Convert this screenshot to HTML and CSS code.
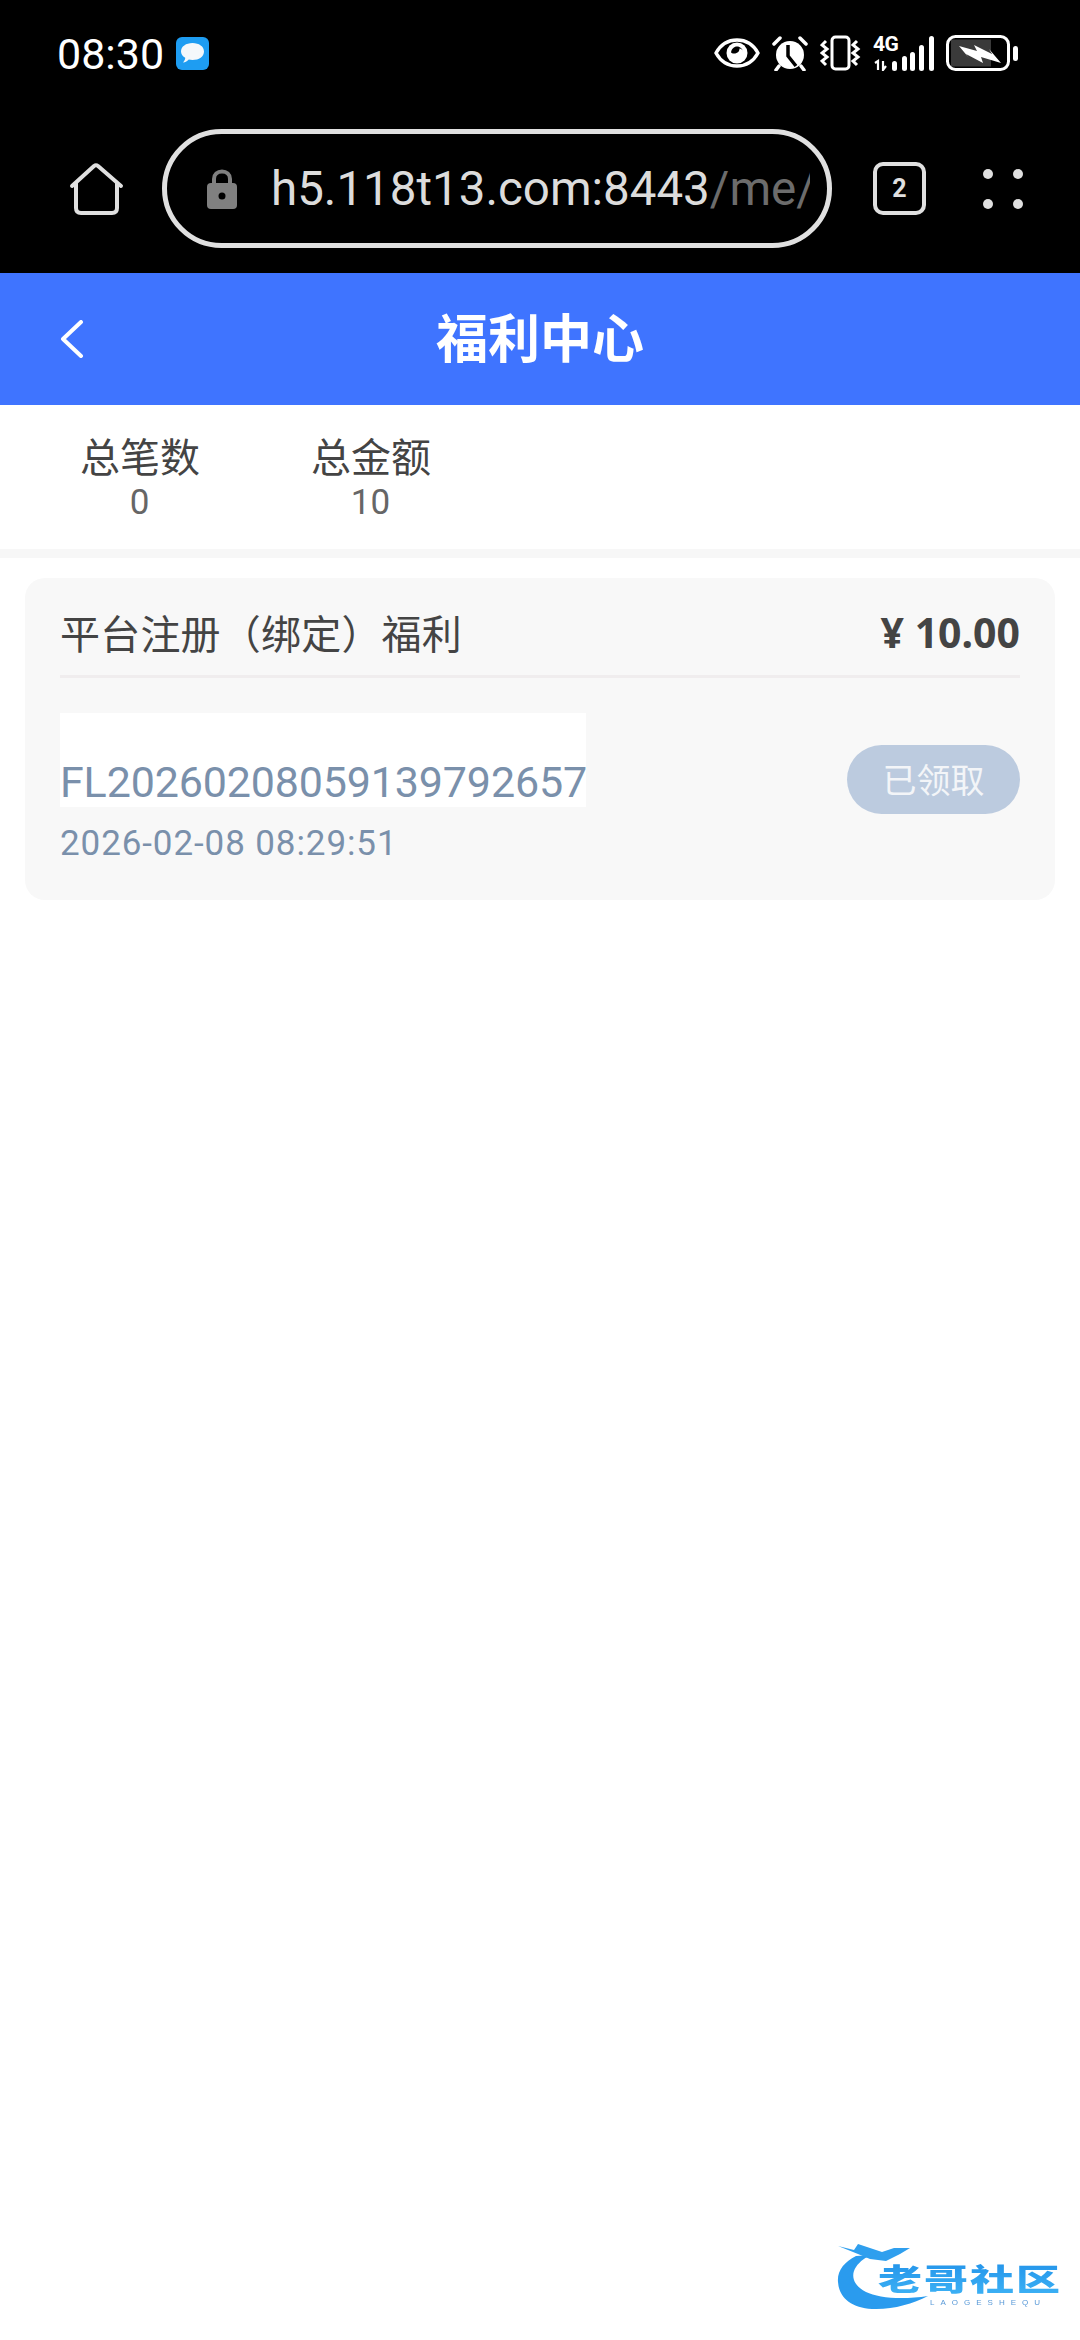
FILE: index.html
```html
<!DOCTYPE html>
<html lang="zh-CN">
<head>
  <meta charset="UTF-8">
  <meta name="viewport" content="width=device-width, initial-scale=1.0">
  <title>福利中心</title>
  <link rel="stylesheet" href="styles.css">
</head>
<body>
  <div class="phone-top">
    <div class="status-bar">
      <div class="status-left">
        <span class="status-time">08:30</span>
        <svg class="msg-icon" width="33" height="33" viewBox="0 0 33 33">
          <rect width="33" height="33" rx="6" fill="#1e9df2"/>
          <path d="M16.5 6C23 6 28 9.500 28 14.500C28 19.500 23 23 16.500 23C15 23 13.800 22.800 12.800 22.500C11.500 24 9.500 25.500 7 25.500C8.500 24 9.300 22.300 9.200 20.800C6.500 19.300 5 17 5 14.500C5 9.500 10 6 16.500 6Z" fill="#f4f8fb"/>
        </svg>
      </div>
      <div class="status-right">
        <svg width="46" height="32" viewBox="0 0 46 32">
          <path d="M2 16C7 7 14 3 23 3C32 3 39 7 44 16C39 25 32 29 23 29C14 29 7 25 2 16Z" fill="none" stroke="#fff" stroke-width="3.500" stroke-linejoin="round"/>
          <circle cx="23" cy="16" r="10.500" fill="#fff"/>
          <path d="M23 9.500C26 9.500 29 12 29 15C29 12.800 27 11.500 25.500 11.500C25.500 14 24 16.500 20 16.500C18.500 16.500 17.500 16 17 15.500C17.500 12 20 9.500 23 9.500Z" fill="#000"/>
        </svg>
        <svg width="36" height="36" viewBox="0 0 36 36">
          <circle cx="18" cy="20" r="14" fill="#fff"/>
          <path d="M16 10V21L24 31" fill="none" stroke="#000" stroke-width="3.500"/>
          <path d="M2 9L8 3M34 9L28 3M7 31L4 35M29 31L32 35" stroke="#fff" stroke-width="3.500" stroke-linecap="round"/>
        </svg>
        <svg width="41" height="36" viewBox="0 0 41 36">
          <rect x="12" y="2" width="17" height="32" rx="3.500" fill="none" stroke="#fff" stroke-width="3"/>
          <path d="M6 6L2 10L7 14L2 18L7 22L2 26L6 30" fill="none" stroke="#fff" stroke-width="3"/>
          <path d="M37 6L33 10L38 14L33 18L38 22L33 26L37 30" fill="none" stroke="#fff" stroke-width="3"/>
        </svg>
        <div class="net-icon">
          <span class="net-label">4G</span>
          <svg width="61" height="36" viewBox="0 0 61 36">
            <path d="M2 28L5 26V35M10 26V35L13 31" fill="none" stroke="#fff" stroke-width="2.200"/>
            <rect x="19" y="26" width="5" height="10" rx="2.500" fill="#fff"/>
            <rect x="29" y="21" width="5" height="15" rx="2.500" fill="#fff"/>
            <rect x="37" y="17" width="5" height="19" rx="2.500" fill="#fff"/>
            <rect x="46" y="10" width="5" height="26" rx="2.500" fill="#fff"/>
            <rect x="56" y="1" width="5" height="35" rx="2.500" fill="#fff"/>
          </svg>
        </div>
        <svg width="72" height="36" viewBox="0 0 72 36">
          <rect x="5" y="4.500" width="40" height="27" fill="#3a3a3a"/>
          <rect x="1.500" y="1.500" width="61" height="33" rx="8" fill="none" stroke="#fff" stroke-width="3"/>
          <rect x="67" y="11" width="5" height="15" rx="2.500" fill="#fff"/>
          <path d="M13 11L31 16L28 10L46 19L43 14L55 28L35 22L37 28L20 19L23 23Z" fill="#fff"/>
        </svg>
      </div>
    </div>
    <div class="browser-bar">
      <svg class="home-icon" width="60" height="60" viewBox="0 0 60 60">
        <path d="M6 27L28 7Q30 5.500 32 7L55 27M10 24V49Q10 54 15 54H46Q51 54 51 49V24" fill="none" stroke="#e0e0e0" stroke-width="4" stroke-linecap="round" stroke-linejoin="round"/>
      </svg>
      <div class="url-pill">
        <svg class="lock-icon" width="30" height="40" viewBox="0 0 30 40">
          <path d="M7 16V10C7 5.500 10.500 2.500 15 2.500C19.500 2.500 23 5.500 23 10V16" fill="none" stroke="#808080" stroke-width="4"/>
          <rect y="14" width="30" height="26" rx="4" fill="#808080"/>
          <circle cx="15" cy="27" r="3.500" fill="#000"/>
        </svg>
        <div class="url-text">h5.118t13.com:8443<span class="url-path">/me/</span></div>
      </div>
      <div class="tab-count">2</div>
      <div class="dots-menu">
        <span class="dot"></span><span class="dot"></span><span class="dot"></span><span class="dot"></span>
      </div>
    </div>
  </div>

  <div class="nav-bar">
    <svg class="back-icon" width="24" height="38" viewBox="0 0 24 38">
      <path d="M21 2L3 19L21 36" fill="none" stroke="#fff" stroke-width="4" stroke-linecap="round" stroke-linejoin="round"/>
    </svg>
    <div class="nav-title">福利中心</div>
  </div>

  <div class="summary">
    <div class="summary-item">
      <div class="summary-label">总笔数</div>
      <div class="summary-value">0</div>
    </div>
    <div class="summary-item">
      <div class="summary-label">总金额</div>
      <div class="summary-value">10</div>
    </div>
  </div>

  <div class="welfare-card">
    <div class="card-head">
      <div class="card-title">平台注册（绑定）福利</div>
      <div class="card-amount">¥ 10.00</div>
    </div>
    <div class="card-body">
      <div class="order-info">
        <div class="order-no">FL20260208059139792657</div>
        <div class="order-time">2026-02-08 08:29:51</div>
      </div>
      <div class="claim-btn">已领取</div>
    </div>
  </div>

  <svg class="watermark" width="270" height="120" viewBox="0 0 270 120">
    <defs>
      <linearGradient id="wmBlue" x1="0" y1="0" x2="0" y2="1">
        <stop offset="0" stop-color="#1f8fe8"/>
        <stop offset="1" stop-color="#3fb4f6"/>
      </linearGradient>
    </defs>
    <path d="M46 36C34 42 27 51 28 62C29 78 42 88 62 89C82 90 102 84 118 76C92 80 68 78 56 72C44 66 40 56 46 47C50 41 56 37 62 35Z" fill="#2a9bee"/>
    <path d="M28 26L44 30L48 24L60 28L72 32L84 28L100 28L90 34L76 41L60 39L48 34Z" fill="#2f9fee"/>
    <text class="wm-title" transform="translate(68 70) scale(1 0.68)" textLength="182" fill="url(#wmBlue)">老哥社区</text>
    <text class="wm-sub" x="120" y="85" textLength="110" fill="#5a9ad8">LAOGESHEQU</text>
  </svg>
</body>
</html>
```

FILE: styles.css
```css
* {
  box-sizing: border-box;
}

body {
  margin: 0;
  width: 1080px;
  height: 2340px;
  overflow: hidden;
  position: relative;
  background: #fff;
  font-family: Roboto, "Noto Sans CJK SC", sans-serif;
}

.phone-top {
  height: 273px;
  background: #000;
  padding-top: 17px;
}

.status-bar {
  height: 72px;
  display: flex;
  justify-content: space-between;
  align-items: center;
  padding: 0 62px 0 57px;
}

.status-left {
  display: flex;
  align-items: center;
  gap: 12px;
}

.status-time {
  color: #fff;
  font-size: 43px;
  line-height: 1;
  padding-top: 2px;
}

.status-right {
  display: flex;
  align-items: center;
  gap: 12px;
}

.net-icon {
  position: relative;
  width: 61px;
  height: 36px;
  display: flex;
}

.net-label {
  position: absolute;
  left: 0;
  top: -1px;
  color: #fff;
  font-size: 21px;
  font-weight: 700;
  line-height: 21px;
  letter-spacing: -0.5px;
}

.browser-bar {
  height: 119px;
  margin-top: 40px;
  display: flex;
  align-items: center;
}

.home-icon {
  margin-left: 66px;
  margin-right: 36px;
  flex-shrink: 0;
}

.url-pill {
  width: 670px;
  height: 119px;
  border: 5px solid #e0e0e0;
  border-radius: 60px;
  display: flex;
  align-items: center;
  padding-left: 40px;
  flex-shrink: 0;
}

.lock-icon {
  flex-shrink: 0;
  margin-right: 34px;
}

.url-text {
  width: 539px;
  overflow: hidden;
  white-space: nowrap;
  color: #dcdcdc;
  font-size: 47.5px;
  line-height: 60px;
}

.url-path {
  color: #6c6c6c;
}

.tab-count {
  width: 53px;
  height: 53px;
  margin-left: 41px;
  border: 4px solid #e0e0e0;
  border-radius: 10px;
  color: #e0e0e0;
  font-size: 25px;
  font-weight: 700;
  display: flex;
  align-items: center;
  justify-content: center;
}

.dots-menu {
  width: 40px;
  margin-left: 57px;
  display: grid;
  grid-template-columns: 10px 10px;
  justify-content: space-between;
  row-gap: 20px;
}

.dot {
  width: 10px;
  height: 10px;
  border-radius: 50%;
  background: #e0e0e0;
}

.nav-bar {
  height: 132px;
  background: #3f74ff;
  display: flex;
  align-items: center;
  justify-content: center;
  position: relative;
}

.back-icon {
  position: absolute;
  left: 60px;
  top: 47px;
}

.nav-title {
  color: #fff;
  font-size: 52px;
  font-weight: 700;
  line-height: 60px;
  padding-top: 3px;
}

.summary {
  height: 153px;
  border-bottom: 9px solid #f7f7f7;
  display: flex;
  padding-top: 32px;
  padding-left: 80px;
  gap: 112px;
}

.summary-item {
  width: 119px;
  text-align: center;
  white-space: nowrap;
}

.summary-label {
  color: #444;
  font-size: 40px;
  line-height: 44px;
}

.summary-value {
  color: #666;
  font-size: 35px;
  line-height: 44px;
}

.welfare-card {
  margin: 20px 25px 0;
  height: 322px;
  background: #f8f8f8;
  border-radius: 20px;
  padding: 0 35px;
}

.card-head {
  height: 100px;
  padding-top: 10px;
  border-bottom: 3px solid #f0edee;
  display: flex;
  justify-content: space-between;
  align-items: center;
}

.card-title {
  color: #444;
  font-size: 40px;
  letter-spacing: 0.2px;
}

.card-amount {
  color: #444;
  font-size: 41px;
  font-weight: 700;
  font-family: "Noto Sans", sans-serif;
}

.card-body {
  display: flex;
  justify-content: space-between;
  align-items: flex-start;
  padding-top: 35px;
}

.order-no {
  width: 526px;
  height: 94px;
  background: #fff;
  color: #7a90ab;
  font-size: 43px;
  line-height: 48px;
  letter-spacing: -0.15px;
  padding-top: 45px;
  white-space: nowrap;
}

.order-time {
  margin-top: 17px;
  color: #7a90ab;
  font-size: 35px;
  line-height: 40px;
  letter-spacing: 0.9px;
}

.claim-btn {
  width: 173px;
  height: 69px;
  margin-top: 32px;
  padding-bottom: 3px;
  border-radius: 35px;
  background: #bccbdf;
  color: #f3f5f8;
  font-size: 34px;
  display: flex;
  align-items: center;
  justify-content: center;
}

.watermark {
  position: absolute;
  left: 810px;
  top: 2220px;
  filter: blur(0.6px);
}

.wm-title {
  font-family: "Noto Sans CJK SC", sans-serif;
  font-size: 44px;
  font-weight: 900;
}

.wm-sub {
  font-family: "Liberation Sans", sans-serif;
  font-size: 8px;
}
```
